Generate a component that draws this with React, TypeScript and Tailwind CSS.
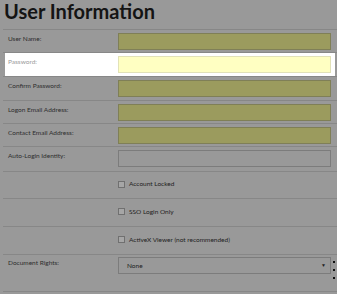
import { ReactNode } from 'react'

type Field = 'filled' | 'empty'

interface TextRow {
  kind: 'text'
  label: string
  field: Field
  active?: boolean
  h: string
}

interface CheckRow {
  kind: 'check'
  label: string
  h: string
}

type Row = TextRow | CheckRow

const rows: Row[] = [
  { kind: 'text', label: 'User Name:', field: 'filled', h: 'h-[23px]' },
  { kind: 'text', label: 'Password:', field: 'filled', active: true, h: 'h-[24px]' },
  { kind: 'text', label: 'Confirm Password:', field: 'filled', h: 'h-[24px]' },
  { kind: 'text', label: 'Logon Email Address:', field: 'filled', h: 'h-[23px]' },
  { kind: 'text', label: 'Contact Email Address:', field: 'filled', h: 'h-[23px]' },
  { kind: 'text', label: 'Auto-Login Identity:', field: 'empty', h: 'h-[25px]' },
  { kind: 'check', label: 'Account Locked', h: 'h-[27px]' },
  { kind: 'check', label: 'SSO Login Only', h: 'h-[28px]' },
  { kind: 'check', label: 'ActiveX Viewer (not recommended)', h: 'h-[28px]' },
]

function RowShell({ h, active, children }: { h: string; active?: boolean; children: ReactNode }) {
  return (
    <div className={`border-t border-[#878787] ${h}`}>
      <div className={`mx-[2px] flex h-full pl-[3px] ${active ? 'bg-white' : ''}`}>{children}</div>
    </div>
  )
}

function Input({ field, active }: { field: Field; active?: boolean }) {
  if (active) {
    return <div className="mt-[3px] h-[17px] w-[213px] border border-[#e2e2b8] bg-[#ffffc2]" />
  }
  if (field === 'empty') {
    return <div className="mt-[3px] h-[17px] w-[213px] border border-[#7c7c7c]" />
  }
  return <div className="mt-[3px] h-[17px] w-[213px] border border-[#7f7f57] bg-[#9b9b5e]" />
}

export default function App() {
  return (
    <div className="h-[294px] w-[337px] overflow-hidden bg-[#999999] font-['Lato',sans-serif]">
      <h1 className="h-[29px] pl-[4px] text-[20px] font-bold leading-[22px] text-[#141414]">
        User Information
      </h1>
      <div className="ml-[3px]">
        {rows.map(row =>
          row.kind === 'text' ? (
            <RowShell key={row.label} h={row.h} active={row.active}>
              <div
                className={`w-[110px] pt-[5px] text-[6.5px] leading-[8px] ${
                  row.active ? 'text-[#9a9a9a]' : 'text-[#2e2e2e]'
                }`}
              >
                {row.label}
              </div>
              <Input field={row.field} active={row.active} />
            </RowShell>
          ) : (
            <RowShell key={row.label} h={row.h}>
              <div className="w-[110px]" />
              <div className="flex items-center gap-[4px] pb-[2px] text-[6.5px] text-[#222222]">
                <span className="h-[7px] w-[7px] border border-[#707070] bg-[#a6a6a6]" />
                <span>{row.label}</span>
              </div>
            </RowShell>
          )
        )}
        <RowShell h="h-[37px]">
          <div className="w-[110px] pt-[4px] text-[6.5px] leading-[8px] text-[#2e2e2e]">Document Rights:</div>
          <div className="mt-[2px] flex h-[17px] w-[213px] items-center justify-between border border-[#7c7c7c] pl-[8px] pr-[4px] text-[6.5px] text-[#222222]">
            <span>None</span>
            <span className="text-[5px] leading-none">▼</span>
          </div>
          <div className="ml-[2px] flex flex-col gap-[6px] pt-[6px]">
            <span className="h-[2px] w-[2px] bg-[#111111]" />
            <span className="h-[2px] w-[2px] bg-[#111111]" />
            <span className="h-[2px] w-[2px] bg-[#111111]" />
          </div>
        </RowShell>
        <div className="border-t border-[#878787]" />
      </div>
    </div>
  )
}
